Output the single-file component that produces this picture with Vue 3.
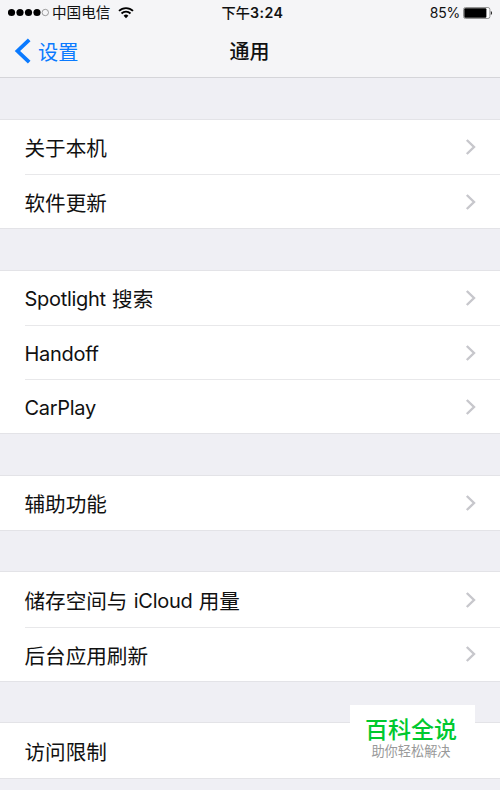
<script setup>
import { ref } from "vue";

// 设置分组，每一行由若干文字片段组成
const groups = ref([
  [[{ text: "关于本机" }], [{ text: "软件更新" }]],
  [
    [{ text: "Spotlight ", latin: true }, { text: "搜索" }],
    [{ text: "Handoff", latin: true }],
    [{ text: "CarPlay", latin: true }],
  ],
  [[{ text: "辅助功能" }]],
  [
    [{ text: "储存空间与" }, { text: " iCloud ", latin: true }, { text: "用量" }],
    [{ text: "后台应用刷新" }],
  ],
  [[{ text: "访问限制" }]],
]);
const battery = ref(85);
</script>

<template>
  <div class="phone">
    <header class="header">
      <!-- 状态栏 -->
      <div class="status">
        <div class="left">
          <svg class="signal" width="42" height="10" viewBox="0 0 42 10">
            <circle v-for="n in 4" :key="n" :cx="3.5 + (n - 1) * 8.5" cy="4.5" r="3.6" fill="#000" />
            <circle cx="37.3" cy="4.5" r="3.2" fill="none" stroke="#777" stroke-width="0.7" />
          </svg>
          <span class="carrier">中国电信</span>
          <svg class="wifi" width="16" height="12" viewBox="0 0 16 12">
            <g fill="none" stroke="#000" stroke-width="1.8">
              <path d="M1 3.9a10 10 0 0 1 14 0" />
              <path d="M3.5 6.5a6.4 6.4 0 0 1 9 0" />
            </g>
            <path d="M8 11.2 5.6 8.8a3.4 3.4 0 0 1 4.8 0z" fill="#000" />
          </svg>
        </div>
        <div class="time"><span class="ampm">下午</span>3:24</div>
        <div class="right">
          <span class="percent">{{ battery }}%</span>
          <svg class="battery" width="30" height="12" viewBox="0 0 30 12">
            <rect x="0.5" y="0.5" width="26.4" height="11" rx="2" fill="#fff" stroke="#888" stroke-width="0.9" />
            <rect x="1.3" y="1.3" :width="(battery / 100) * 26" height="9.4" rx="1" fill="#000" />
            <path d="M27.8 4a2.2 2.2 0 0 1 0 4z" fill="#222" />
          </svg>
        </div>
      </div>
      <!-- 导航栏 -->
      <nav class="nav">
        <a class="back">
          <svg width="17" height="26" viewBox="0 0 17 26">
            <path d="M15.2 1.8 3.5 13l11.7 11.2" fill="none" stroke="#0a7aff" stroke-width="3.8" />
          </svg>
          <span>设置</span>
        </a>
        <h1>通用</h1>
      </nav>
    </header>

    <!-- 设置列表 -->
    <main>
      <ul v-for="(group, i) in groups" :key="i" class="group">
        <li v-for="(row, j) in group" :key="j" class="row">
          <span class="label"><span v-for="(part, k) in row" :key="k" :class="{ latin: part.latin }">{{ part.text }}</span></span>
          <svg v-if="i < 4" class="arrow" width="12" height="18" viewBox="0 0 12 18">
            <path d="M1.8 2 9 9l-7.2 7" fill="none" stroke="#c7c7cc" stroke-width="2.4" />
          </svg>
        </li>
      </ul>
    </main>

    <aside class="badge">
      <strong>百科全说</strong>
      <small>助你轻松解决</small>
    </aside>
  </div>
</template>

<style>
body {
  margin: 0;
  background: #efeff4;
}
</style>

<style scoped>
.phone {
  position: relative;
  height: 790px;
  overflow: hidden;
  background: #efeff4;
  color: #111;
  font-family: Inter, "Noto Sans CJK SC", sans-serif;
}
.header {
  box-sizing: border-box;
  height: 78px;
  background: #f5f5f7;
  border-bottom: 1px solid #d5d5d9;
}
.status {
  display: grid;
  grid-template-columns: 1fr auto 1fr;
  align-items: center;
  height: 25px;
  padding: 0 7px 0 8px;
  font-size: 14.3px;
  line-height: 25px;
}
.left,
.right {
  display: flex;
  align-items: center;
}
.carrier {
  margin: 0 8px 0 2px;
  padding-top: 2px;
  font-size: 14.6px;
  line-height: 23px;
}
.time {
  padding-left: 4px;
  font-weight: 600;
  font-size: 14.2px;
  letter-spacing: 0.5px;
}
.ampm {
  font-weight: 500;
  letter-spacing: 0;
}
.right {
  justify-content: flex-end;
  gap: 3px;
}
.percent {
  font-size: 14px;
  letter-spacing: -0.2px;
}
.nav {
  display: grid;
  grid-template-columns: 1fr auto 1fr;
  align-items: center;
  height: 52px;
  padding: 0 15px 0 14px;
}
.back {
  display: flex;
  align-items: center;
  gap: 7px;
  color: #0a7aff;
  font-size: 20.2px;
}
.back span {
  padding-top: 3px;
  line-height: 28px;
}
h1 {
  margin: 0;
  padding-top: 2px;
  font-size: 20px;
  font-weight: 500;
  line-height: 30px;
}
main {
  display: flex;
  flex-direction: column;
  gap: 42.3px;
  padding-top: 41.7px;
}
.group {
  margin: 0;
  padding: 0 0 0 24.5px;
  list-style: none;
  background: #fff;
  box-shadow: 0 -1px #e3e3e7, 0 1px #e3e3e7;
}
.row {
  display: flex;
  align-items: center;
  justify-content: space-between;
  box-sizing: border-box;
  height: 54.3px;
  padding-right: 23px;
}
.row + .row {
  border-top: 1px solid #e8e8ea;
}
.label {
  padding-top: 4.6px;
  font-size: 20.6px;
  line-height: 30px;
  white-space: pre;
}
.latin {
  position: relative;
  top: -1px;
  font-size: 20px;
  letter-spacing: -0.3px;
  word-spacing: 1px;
}
.badge {
  position: absolute;
  left: 350px;
  top: 705px;
  display: flex;
  flex-direction: column;
  align-items: center;
  box-sizing: border-box;
  width: 125px;
  height: 72px;
  padding: 10px 3px 0 0;
  background: #fff;
}
.badge strong {
  color: #00c92f;
  font-size: 23px;
  font-weight: 500;
  line-height: 30px;
}
.badge small {
  color: #999;
  font-size: 13.2px;
  line-height: 13px;
}
</style>
